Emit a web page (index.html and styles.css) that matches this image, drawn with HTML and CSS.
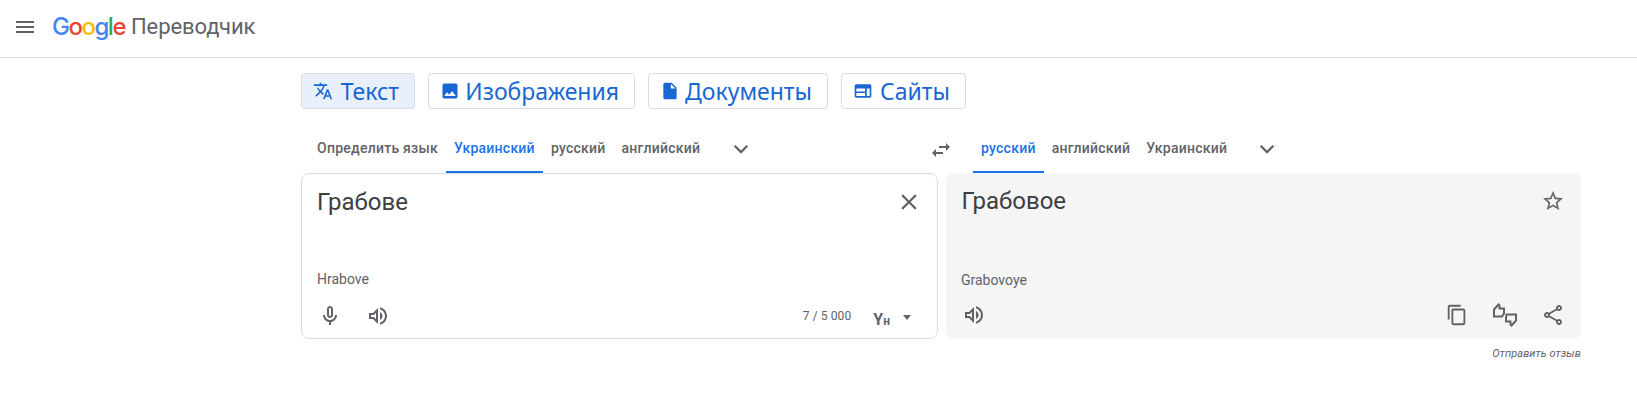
FILE: index.html
```html
<!DOCTYPE html>
<html lang="ru">
<head>
<meta charset="utf-8">
<title>Google Переводчик</title>
<link rel="stylesheet" href="styles.css">
</head>
<body>
<header class="topbar">
  <svg class="menu-icon" viewBox="0 0 24 24"><path d="M3 18h18v-2H3v2zm0-5h18v-2H3v2zm0-7v2h18V6H3z"/></svg>
  <div class="logo"><span class="g-blue">G</span><span class="g-red">o</span><span class="g-yellow">o</span><span class="g-blue">g</span><span class="g-green">l</span><span class="g-red">e</span></div>
  <div class="product">Переводчик</div>
</header>
<main class="main">
  <nav class="modes">
    <div class="mode mode-active"><svg class="mode-icon" viewBox="0 0 24 24"><path d="M12.87 15.07l-2.54-2.51.03-.03c1.74-1.94 2.98-4.17 3.71-6.53H17V4h-7V2H8v2H1v1.99h11.17C11.5 7.92 10.44 9.75 9 11.35 8.07 10.32 7.3 9.19 6.69 8h-2c.73 1.63 1.73 3.17 2.98 4.56l-5.09 5.02L4 19l5-5 3.11 3.11.76-2.04zM18.5 10h-2L12 22h2l1.12-3h4.75L21 22h2l-4.5-12zm-2.62 7l1.62-4.33L19.12 17h-3.24z"/></svg>Текст</div>
    <div class="mode"><svg class="mode-icon" viewBox="0 0 24 24"><path d="M21 19V5c0-1.1-.9-2-2-2H5c-1.1 0-2 .9-2 2v14c0 1.1.9 2 2 2h14c1.1 0 2-.9 2-2zM8.5 13.5l2.5 3.01L14.5 12l4.5 6H5l3.5-4.5z"/></svg>Изображения</div>
    <div class="mode"><svg class="mode-icon" viewBox="0 0 24 24"><path d="M6 2c-1.1 0-1.99.9-1.99 2L4 20c0 1.1.89 2 1.99 2H18c1.1 0 2-.9 2-2V8l-6-6H6zm7 7V3.5L18.5 9H13z"/></svg>Документы</div>
    <div class="mode"><svg class="mode-icon" viewBox="0 0 24 24"><path d="M20 4H4c-1.1 0-2 .9-2 2v12c0 1.1.9 2 2 2h16c1.1 0 2-.9 2-2V6c0-1.1-.9-2-2-2zM4 9h10.5v3.500H4V9zm0 5.500h10.500V18H4v-3.500zM20 18h-3.500V9H20v9z"/></svg>Сайты</div>
  </nav>
  <div class="langs">
    <div class="lang-group">
      <span class="lang">Определить язык</span>
      <span class="lang lang-active">Украинский</span>
      <span class="lang">русский</span>
      <span class="lang">английский</span>
      <svg class="chevron" viewBox="2 2 20 20"><path d="M16.59 8.59L12 13.17 7.41 8.59 6 10l6 6 6-6z"/></svg>
    </div>
    <svg class="swap" viewBox="0 0 24 24"><path d="M6.99 11L3 15l3.99 4v-3H14v-2H6.99v-3zM21 9l-3.99-4v3H10v2h7.01v3L21 9z"/></svg>
    <div class="lang-group lang-group-target">
      <span class="lang lang-active">русский</span>
      <span class="lang">английский</span>
      <span class="lang">Украинский</span>
      <svg class="chevron" viewBox="2 2 20 20"><path d="M16.59 8.59L12 13.17 7.41 8.59 6 10l6 6 6-6z"/></svg>
    </div>
  </div>
  <div class="panels">
    <section class="card card-source">
      <div class="card-top">
        <div class="big-text">Грабове</div>
        <svg class="icon" viewBox="1 1 22 22"><path d="M19 6.41L17.59 5 12 10.59 6.41 5 5 6.41 10.59 12 5 17.59 6.41 19 12 13.41 17.59 19 19 17.59 13.41 12z"/></svg>
      </div>
      <div class="translit">Hrabove</div>
      <div class="actions">
        <svg class="icon" viewBox="0 0 24 24"><path d="M12 14c1.66 0 3-1.34 3-3V5c0-1.66-1.34-3-3-3S9 3.34 9 5v6c0 1.66 1.34 3 3 3zm-1-9c0-.55.45-1 1-1s1 .45 1 1v6c0 .55-.45 1-1 1s-1-.45-1-1V5z"/><path d="M17 11c0 2.76-2.24 5-5 5s-5-2.24-5-5H5c0 3.53 2.61 6.43 6 6.92V21h2v-3.08c3.39-.49 6-3.39 6-6.92h-2z"/></svg>
        <svg class="icon" viewBox="0 0 24 24"><path d="M3 9v6h4l5 5V4L7 9H3zm7-.17v6.34L7.83 13H5v-2h2.83L10 8.83zM16.5 12c0-1.77-1.02-3.29-2.5-4.03v8.05c1.48-.73 2.5-2.25 2.5-4.02zM14 3.23v2.06c2.89.86 5 3.54 5 6.71s-2.11 5.85-5 6.71v2.06c4.01-.91 7-4.49 7-8.77 0-4.28-2.99-7.86-7-8.77z"/></svg>
        <div class="spacer"></div>
        <span class="counter">7 / 5 000</span>
        <span class="ime"><b class="ime-y">Y</b><b class="ime-n">н</b></span>
        <span class="caret"></span>
      </div>
    </section>
    <section class="card card-target">
      <div class="card-top">
        <div class="big-text">Грабовое</div>
        <svg class="icon" viewBox="0 0 24 24"><path d="M22 9.24l-7.19-.62L12 2 9.19 8.63 2 9.24l5.46 4.73L5.82 21 12 17.27 18.18 21l-1.63-7.03L22 9.24zM12 15.4l-3.76 2.27 1-4.28-3.32-2.88 4.38-.38L12 6.1l1.71 4.04 4.38.38-3.32 2.88 1 4.28L12 15.4z"/></svg>
      </div>
      <div class="translit">Grabovoye</div>
      <div class="actions">
        <svg class="icon" viewBox="0 0 24 24"><path d="M3 9v6h4l5 5V4L7 9H3zm7-.17v6.34L7.83 13H5v-2h2.83L10 8.83zM16.5 12c0-1.77-1.02-3.29-2.5-4.03v8.05c1.48-.73 2.5-2.25 2.5-4.02zM14 3.23v2.06c2.89.86 5 3.54 5 6.71s-2.11 5.85-5 6.71v2.06c4.01-.91 7-4.49 7-8.77 0-4.28-2.99-7.86-7-8.77z"/></svg>
        <div class="spacer"></div>
        <svg class="icon" viewBox="-1 -1 26 26"><path d="M16 1H4c-1.1 0-2 .9-2 2v14h2V3h12V1zm3 4H8c-1.1 0-2 .9-2 2v14c0 1.1.9 2 2 2h11c1.1 0 2-.9 2-2V7c0-1.1-.9-2-2-2zm0 16H8V7h11v14z"/></svg>
        <svg class="icon icon-rate" viewBox="0 0 24 24"><path class="rate-line" d="M1 13.500V6.500L5.500 1.500 6.500 2.500V5.500H11V10.500L9 13.500ZM13.500 11.500H23V17.500L18.500 22.500 17.500 21.500V18.500H13V14.500Z"/></svg>
        <svg class="icon" viewBox="0 0 24 24"><path d="M18 16.08c-.76 0-1.44.3-1.96.77L8.91 12.7c.05-.23.09-.46.09-.7s-.04-.47-.09-.7l7.05-4.11c.54.5 1.25.81 2.04.81 1.66 0 3-1.34 3-3s-1.34-3-3-3-3 1.34-3 3c0 .24.04.47.09.7L8.04 9.81C7.5 9.31 6.79 9 6 9c-1.66 0-3 1.34-3 3s1.34 3 3 3c.79 0 1.5-.31 2.04-.81l7.12 4.16c-.05.21-.08.43-.08.65 0 1.61 1.31 2.92 2.92 2.92 1.61 0 2.92-1.31 2.92-2.92s-1.31-2.92-2.92-2.92zM18 4c.55 0 1 .45 1 1s-.45 1-1 1-1-.45-1-1 .45-1 1-1zM6 13c-.55 0-1-.45-1-1s.45-1 1-1 1 .45 1 1-.45 1-1 1zm12 7.02c-.55 0-1-.45-1-1s.45-1 1-1 1 .45 1 1-.45 1-1 1z"/></svg>
      </div>
    </section>
  </div>
  <div class="feedback">Отправить отзыв</div>
</main>
</body>
</html>
```
FILE: styles.css
```css
* { box-sizing: border-box; }
html, body { margin: 0; padding: 0; background: #fff; }
body { font-family: Roboto, "Liberation Sans", sans-serif; color: #3c4043; overflow: hidden; }
svg { fill: currentColor; flex: none; display: block; }

.topbar { height: 58px; border-bottom: 1px solid #e0e0e0; display: flex; align-items: center; padding: 0 0 4px 13px; }
.menu-icon { width: 24px; height: 24px; color: #5f6368; }
.logo { margin-left: 15px; font: 500 24px/1 Inter, sans-serif; letter-spacing: -1.5px; width: 79px; }
.g-blue { color: #4285f4; }
.g-red { color: #ea4335; }
.g-yellow { color: #fbbc05; }
.g-green { color: #34a853; }
.product { font-size: 22px; letter-spacing: -.1px; color: #5f6368; }

.main { padding-left: 301px; width: 1581px; }
.modes { display: grid; grid-template-columns: 114px 207px 180px 125px; gap: 13px; padding-top: 15px; }
.mode { height: 36px; display: flex; align-items: center; justify-content: space-between; padding: 0 15px 0 11px; border: 1px solid #dadce0; border-radius: 4px; color: #1967d2; font: 400 23px/1 "Noto Sans", sans-serif; }
.mode-icon { width: 20px; height: 20px; }
.mode-active { background: #e8f0fe; }

.langs { display: flex; align-items: stretch; height: 64px; }
.lang-group { display: flex; align-items: flex-end; flex: none; width: 601px; }
.lang-group-target { width: 632px; margin-left: 12px; }
.lang { height: 36px; padding: 3px 8px 0; font-size: 14px; font-weight: 500; letter-spacing: .25px; color: #5f6368; border-bottom: 2px solid transparent; white-space: nowrap; }
.lang-active { color: #1a73e8; border-bottom-color: #1a73e8; }
.lang-group .lang:first-child { margin-left: 8px; }
.chevron { width: 24px; height: 24px; color: #5f6368; margin: 0 0 12px 21px; }
.lang-group-target .chevron { margin-left: 20px; }
.swap { width: 24px; height: 24px; color: #5f6368; margin: 29px 0 0 27px; }

.panels { display: flex; gap: 8px; }
.card { height: 166px; border-radius: 8px; display: flex; flex-direction: column; }
.card-source { width: 637px; border: 1px solid #dadce0; padding: 0 16px; }
.card-target { width: 635px; background: #f5f5f5; padding: 0 16px; }
.card-top { display: flex; justify-content: space-between; padding-top: 12px; height: 95px; }
.big-text { font-size: 24px; line-height: 32px; color: #3c4043; margin-left: -1px; }
.card-target .big-text { margin-left: -.5px; }
.icon { width: 24px; height: 24px; color: #5f6368; }
.card-top .icon { margin: 4px 0 0; }
.translit { font-size: 14px; line-height: 20px; color: #5f6368; margin-left: -1px; }
.card-target .translit { margin-top: 2px; }
.actions { display: flex; align-items: center; gap: 24px; margin-top: 13px; }
.spacer { flex: 1; }
.counter { font-size: 12px; letter-spacing: .1px; color: #5f6368; margin-right: -3px; }
.ime { display: flex; align-items: baseline; color: #5f6368; margin: 8px -1px 0 1px; }
.ime-y { font-size: 16px; }
.ime-n { font-size: 12px; }
.caret { width: 0; height: 0; border: 4px solid transparent; border-top: 5px solid #5f6368; border-bottom: 0; margin: 3px 10px 0 -10px; }
.rate-line { fill: none; stroke: currentColor; stroke-width: 2; }
.feedback { text-align: right; font-size: 11px; letter-spacing: .1px; font-style: italic; color: #5f6368; margin-top: 8px; }
```
